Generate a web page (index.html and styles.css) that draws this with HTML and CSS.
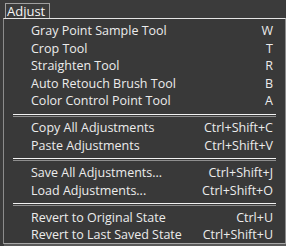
FILE: index.html
```html
<!DOCTYPE html>
<html lang="en">

<head>
    <meta charset="UTF-8">
    <meta name="viewport" content="width=device-width, initial-scale=1.0">
    <title>Adjust</title>
    <link rel="stylesheet" href="styles.css">
</head>

<body>
    <div class="menubar">
        <div class="menubar-item">Adjust</div>
    </div>
    <div class="menu">
        <div class="item"><span>Gray Point Sample Tool</span><span>W</span></div>
        <div class="item"><span>Crop Tool</span><span>T</span></div>
        <div class="item"><span>Straighten Tool</span><span>R</span></div>
        <div class="item"><span>Auto Retouch Brush Tool</span><span>B</span></div>
        <div class="item"><span>Color Control Point Tool</span><span>A</span></div>
        <div class="sep"></div>
        <div class="item"><span>Copy All Adjustments</span><span>Ctrl+Shift+C</span></div>
        <div class="item"><span>Paste Adjustments</span><span>Ctrl+Shift+V</span></div>
        <div class="sep"></div>
        <div class="item"><span>Save All Adjustments...</span><span>Ctrl+Shift+J</span></div>
        <div class="item"><span>Load Adjustments...</span><span>Ctrl+Shift+O</span></div>
        <div class="sep"></div>
        <div class="item"><span>Revert to Original State</span><span>Ctrl+U</span></div>
        <div class="item"><span>Revert to Last Saved State</span><span>Ctrl+Shift+U</span></div>
    </div>
</body>

</html>
```

FILE: styles.css
```css
* {
    padding: 0;
    margin: 0;
    box-sizing: border-box;
}

html,
body {
    width: 100%;
    height: 100%;
    background-color: #3b3b3b;
    overflow: hidden;
}

body {
    font-family: "Open Sans", "Noto Sans", sans-serif;
    font-size: 12.5px;
    color: #ececec;
}

.menubar {
    height: 18px;
    padding-left: 5px;
    display: flex;
    align-items: flex-end;
}

.menubar-item {
    height: 15px;
    line-height: 14px;
    padding: 0 4px 0 1px;
    border: 1px solid #a0a0a0;
    border-bottom: none;
    color: #f6f6f6;
    font-size: 13px;
}

.menu {
    margin-left: 3px;
    width: 283px;
    height: 226px;
    padding-top: 3px;
    background-color: #393939;
    border-top: 1px solid #e4e4e4;
    border-left: 1px solid #8c8c8c;
    border-right: 1px solid #8c8c8c;
    border-bottom: 1px solid #a8a8a8;
    box-shadow: 1px 2px 0 #5a5a5a;
}

.item {
    height: 17.6px;
    line-height: 17.6px;
    display: flex;
    justify-content: space-between;
    padding: 0 12px 0 27px;
    white-space: nowrap;
}

.sep {
    height: 9.4px;
    display: flex;
    align-items: center;
    padding: 0 9px;
}

.sep::before {
    content: "";
    flex: 1;
    height: 1px;
    border-top: 1px solid #f2f2f2;
    box-shadow: 0 1px 0 #8e8e8e;
}
```
